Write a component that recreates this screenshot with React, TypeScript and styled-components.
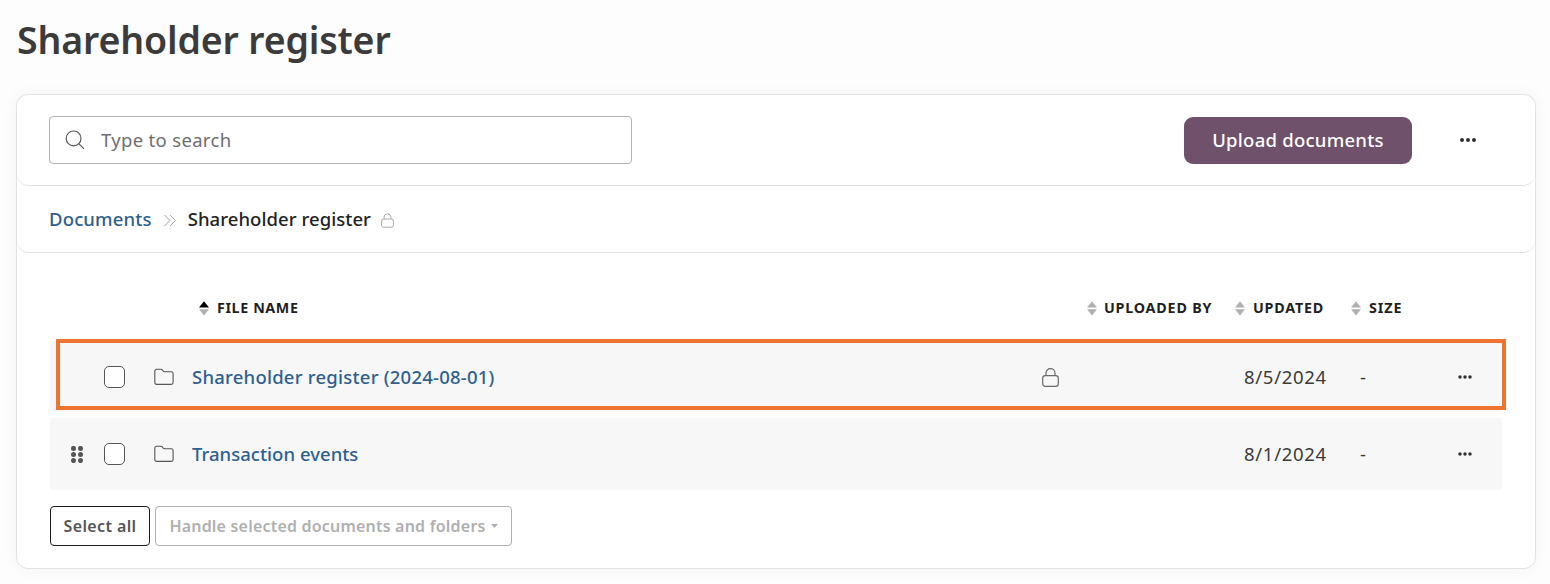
import React from 'react';
import styled, { createGlobalStyle } from 'styled-components';

const GlobalStyle = createGlobalStyle`
  *, *::before, *::after { box-sizing: border-box; }
  body {
    margin: 0;
    background: #fdfdfd;
    color: #3b3b3b;
    font-family: 'Noto Sans', 'Liberation Sans', sans-serif;
    font-size: 18.5px;
  }
  button, input { font: inherit; }
  svg { display: block; flex: none; }
`;

const Page = styled.main`
  height: 584px;
  padding: 14px 14px 0 16px;
  overflow: hidden;
`;

const Title = styled.h1`
  margin: 0 0 28px;
  padding-left: 1px;
  height: 52px;
  line-height: 52px;
  font-size: 37.5px;
  font-weight: 600;
  letter-spacing: -0.15px;
  white-space: nowrap;
`;

const Card = styled.section`
  height: 475px;
  background: #fff;
  border: 1px solid #e3e3e3;
  border-radius: 12px;
  box-shadow: 0 0 16px rgba(0, 0, 0, 0.045);
`;

const Toolbar = styled.div`
  display: flex;
  align-items: center;
  height: 91px;
  padding: 0 59px 0 32px;
  border-bottom: 1px solid #e3e3e3;
  border-radius: 0 0 12px 12px;
`;

const SearchBox = styled.label`
  display: flex;
  align-items: center;
  gap: 16px;
  width: 583px;
  height: 48px;
  padding: 0 15px;
  border: 1px solid #b3b3b3;
  border-radius: 4px;
`;

const SearchInput = styled.input`
  flex: 1;
  min-width: 0;
  padding: 0 0 2px;
  border: 0;
  outline: 0;
  background: transparent;
  letter-spacing: 0.32px;
  &::placeholder { color: #6e6e6e; opacity: 1; }
`;

const UploadButton = styled.button`
  width: 228px;
  height: 47px;
  margin: 1px 48px 0 auto;
  padding: 0 0 3px;
  border: 0;
  border-radius: 9px;
  background: #6f516b;
  color: #fff;
  font-weight: 500;
  letter-spacing: 0.25px;
  white-space: nowrap;
`;

const Breadcrumb = styled.nav`
  display: flex;
  align-items: center;
  height: 67px;
  padding: 0 32px 2px;
  border-bottom: 1px solid #e3e3e3;
  border-radius: 0 0 12px 12px;
  font-weight: 500;
  letter-spacing: 0.12px;
`;

const Link = styled.a<{ $spacing?: number }>`
  color: #2e608e;
  font-weight: 500;
  letter-spacing: ${(p) => p.$spacing ?? 0.15}px;
  text-decoration: none;
  white-space: nowrap;
`;

const Separator = styled.span`
  display: flex;
  margin: 5px 12px 0 12px;
  color: #a0a0a0;
`;

const Current = styled.span`
  margin-right: 10px;
  color: #222;
  letter-spacing: 0.06px;
  white-space: nowrap;
`;

const CrumbLock = styled.span`
  display: flex;
  margin-top: 5px;
  color: #a3a3a3;
`;

const Table = styled.div`
  display: flex;
  flex-direction: column;
  width: 1452px;
  margin-left: 33px;
`;

const Grid = styled.div`
  display: grid;
  grid-template-columns: 54px 50px 38px 1fr 45px 148px 116px 106px 45px;
  align-items: center;
`;

const HeaderRow = styled(Grid)`
  height: 88px;
  padding-top: 22px;
`;

const HeaderCell = styled.div<{ $column: number; $gap?: number; $indent?: number; $spacing: number }>`
  grid-column: ${(p) => p.$column};
  display: flex;
  align-items: center;
  gap: ${(p) => p.$gap ?? 8}px;
  padding-left: ${(p) => p.$indent ?? 0}px;
  color: #1f1f1f;
  font-size: 14.3px;
  font-weight: 700;
  letter-spacing: ${(p) => p.$spacing}px;
  white-space: nowrap;
`;

const HeaderLabel = styled.span`
  padding-bottom: 2px;
`;

const FileRow = styled(Grid)<{ $highlighted?: boolean }>`
  position: relative;
  height: ${(p) => (p.$highlighted ? 71 : 72)}px;
  margin-bottom: ${(p) => (p.$highlighted ? 6 : 0)}px;
  background: #f7f7f7;
  border-radius: 3px;
`;

const Highlight = styled.div`
  position: absolute;
  top: -2px;
  left: 6px;
  right: -4px;
  bottom: 2px;
  border: 4px solid #ee7530;
  pointer-events: none;
`;

const Cell = styled.div<{ $column: number; $indent?: number }>`
  grid-column: ${(p) => p.$column};
  grid-row: 1;
  display: flex;
  align-items: center;
  padding-left: ${(p) => p.$indent ?? 0}px;
  white-space: nowrap;
`;

const TextCell = styled(Cell)<{ $lift?: boolean }>`
  padding-bottom: ${(p) => (p.$lift ? 2 : 0)}px;
  letter-spacing: 0.7px;
`;

const LockCell = styled(Cell)`
  padding-top: 1px;
  color: #6a6a6a;
`;

const Checkbox = styled.input`
  appearance: none;
  width: 21px;
  height: 22px;
  margin: 0;
  border: 1px solid #555;
  border-radius: 5px;
  background: #fff;
`;

const Actions = styled.div`
  display: flex;
  gap: 5px;
  padding: 16px 0 0 33px;
`;

const ActionButton = styled.button<{ $muted?: boolean; $width: number }>`
  display: flex;
  align-items: center;
  justify-content: center;
  gap: 5px;
  width: ${(p) => p.$width}px;
  height: 40px;
  padding: 0;
  border: 1px solid ${(p) => (p.$muted ? '#b0b0b0' : '#1c1c1c')};
  border-radius: 4px;
  background: #fff;
  color: ${(p) => (p.$muted ? '#b0b0b0' : '#555')};
  font-size: 16px;
  font-weight: 600;
  letter-spacing: ${(p) => (p.$muted ? 0.2 : 0.38)}px;
  white-space: nowrap;
`;

const SearchIcon = () => (
  <svg width="20" height="20" viewBox="0 0 20 20" fill="none" stroke="#555" strokeWidth="1.15">
    <circle cx="8.6" cy="8.4" r="7.4" />
    <path d="M13.8 13.7 19 18.8" />
  </svg>
);

const ChevronsIcon = () => (
  <svg width="12" height="13" viewBox="0 0 12 13" fill="none" stroke="currentColor" strokeWidth="1">
    <path d="M.6 1 5.8 6.5.6 12M6.2 1l5.2 5.5L6.2 12" />
  </svg>
);

const LockIcon = ({ width, height }: { width: number; height: number }) => (
  <svg width={width} height={height} viewBox="0 0 17 19" fill="none" stroke="currentColor" strokeWidth="1.2">
    <rect x=".7" y="7.6" width="15.6" height="10.7" rx="2.6" />
    <path d="M4 7.6V5.2a4.5 4.5 0 0 1 9 0v2.4" />
  </svg>
);

const FolderIcon = () => (
  <svg width="20" height="18" viewBox="0 0 20 18" fill="none" stroke="#555" strokeWidth="1.1">
    <path d="M.8 3.2c0-1.2.8-2 2-2h4c.8 0 1.3.3 1.7.9l.6.9c.3.5.7.7 1.4.7h6.7c1.1 0 1.9.8 1.9 1.9v8.9c0 1.1-.8 1.9-1.9 1.9H2.8c-1.2 0-2-.8-2-1.9Z" />
  </svg>
);

const MoreIcon = ({ size = 14 }: { size?: number }) => (
  <svg width={size} height="6" viewBox={`0 0 ${size} 6`} fill="#303030">
    {[-1, 0, 1].map((n) => (
      <circle key={n} cx={size / 2 + n * (size / 2 - 2)} cy="3" r={size > 14 ? 2 : 1.75} />
    ))}
  </svg>
);

const DragIcon = () => (
  <svg width="12" height="17" viewBox="0 0 12 17" fill="#555">
    {[2.4, 8.5, 14.6].map((y) => (
      <React.Fragment key={y}>
        <circle cx="2.5" cy={y} r="2.5" />
        <circle cx="9.5" cy={y} r="2.5" />
      </React.Fragment>
    ))}
  </svg>
);

const SortIcon = ({ ascending }: { ascending?: boolean }) => (
  <svg width="10" height="15" viewBox="0 0 10 15">
    <path d="M5 .3 10 6.5H0Z" fill={ascending ? '#000' : '#b0b0b0'} />
    <path d="M0 8.3h10L5 14.6Z" fill="#b0b0b0" />
  </svg>
);

const CaretIcon = () => (
  <svg width="7" height="4" viewBox="0 0 7 4" fill="currentColor">
    <path d="M0 0h7L3.5 4Z" />
  </svg>
);

type Entry = { name: string; updated: string; locked?: boolean; spacing: number };

const entries: Entry[] = [
  { name: 'Shareholder register (2024-08-01)', updated: '8/5/2024', locked: true, spacing: 0.23 },
  { name: 'Transaction events', updated: '8/1/2024', spacing: 0.03 },
];

const EntryRow = ({ entry }: { entry: Entry }) => (
  <FileRow $highlighted={entry.locked}>
    {!entry.locked && <Cell $column={1} $indent={21}><DragIcon /></Cell>}
    <Cell $column={2}><Checkbox type="checkbox" aria-label={entry.name} /></Cell>
    <Cell $column={3}><FolderIcon /></Cell>
    <TextCell $column={4} $lift={!entry.locked}><Link $spacing={entry.spacing}>{entry.name}</Link></TextCell>
    {entry.locked && <LockCell $column={5}><LockIcon width={17} height={19} /></LockCell>}
    <TextCell $column={7} $indent={9} $lift={!entry.locked}>{entry.updated}</TextCell>
    <TextCell $column={8} $indent={9} $lift={!entry.locked}>-</TextCell>
    <Cell $column={9} $indent={1}><MoreIcon /></Cell>
    {entry.locked && <Highlight />}
  </FileRow>
);

export default function App() {
  return (
    <Page>
      <GlobalStyle />
      <Title>Shareholder register</Title>
      <Card>
        <Toolbar>
          <SearchBox>
            <SearchIcon />
            <SearchInput placeholder="Type to search" />
          </SearchBox>
          <UploadButton>Upload documents</UploadButton>
          <MoreIcon size={16} />
        </Toolbar>
        <Breadcrumb>
          <Link>Documents</Link>
          <Separator><ChevronsIcon /></Separator>
          <Current>Shareholder register</Current>
          <CrumbLock><LockIcon width={13} height={15} /></CrumbLock>
        </Breadcrumb>
        <Table>
          <HeaderRow>
            <HeaderCell $column={4} $indent={7} $spacing={0.6}><SortIcon ascending /><HeaderLabel>FILE NAME</HeaderLabel></HeaderCell>
            <HeaderCell $column={6} $gap={7} $spacing={0.8}><SortIcon /><HeaderLabel>UPLOADED BY</HeaderLabel></HeaderCell>
            <HeaderCell $column={7} $spacing={0.8}><SortIcon /><HeaderLabel>UPDATED</HeaderLabel></HeaderCell>
            <HeaderCell $column={8} $spacing={0.9}><SortIcon /><HeaderLabel>SIZE</HeaderLabel></HeaderCell>
          </HeaderRow>
          {entries.map((entry) => <EntryRow key={entry.name} entry={entry} />)}
        </Table>
        <Actions>
          <ActionButton $width={100}>Select all</ActionButton>
          <ActionButton $width={357} $muted>Handle selected documents and folders<CaretIcon /></ActionButton>
        </Actions>
      </Card>
    </Page>
  );
}
